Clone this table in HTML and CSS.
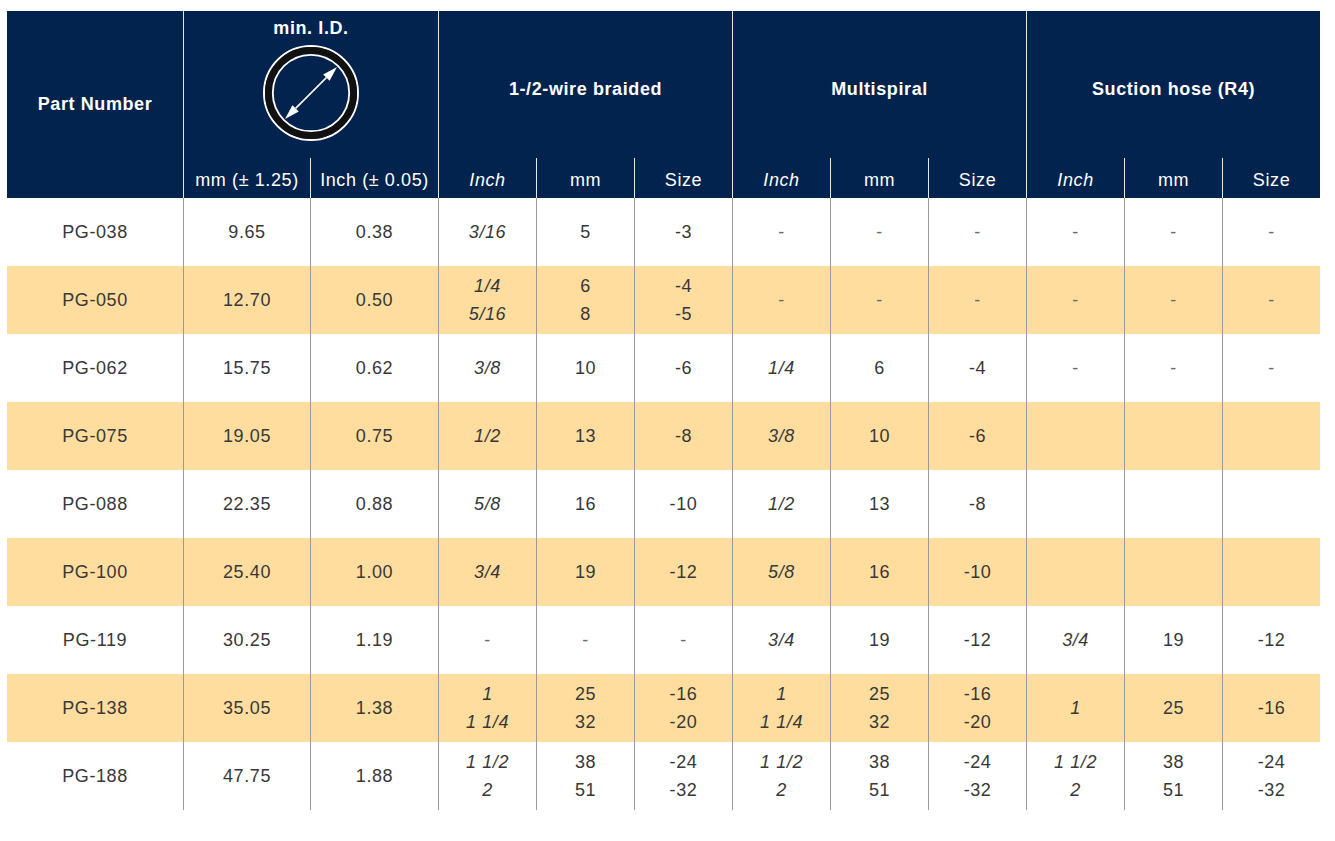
FILE: index.html
```html
<!DOCTYPE html>
<html lang="en">
<head>
<meta charset="utf-8">
<title>Hose size table</title>
<link rel="stylesheet" href="styles.css">
</head>
<body>
<table class="spec">
  <colgroup>
    <col class="c-pn">
    <col class="c-id"><col class="c-id2">
    <col class="c-s"><col class="c-s"><col class="c-s">
    <col class="c-s"><col class="c-s"><col class="c-s">
    <col class="c-s"><col class="c-s"><col class="c-s">
  </colgroup>
  <thead>
    <tr class="g-row">
      <th class="pn" rowspan="2">Part Number</th>
      <th class="mid" colspan="2">
        <div class="mid-title">min. I.D.</div>
        <svg class="mid-icon" width="100" height="100" viewBox="0 0 100 100" aria-hidden="true">
          <circle cx="50" cy="50" r="47" fill="none" stroke="#fff" stroke-width="2"/>
          <circle cx="50" cy="50" r="42.5" fill="none" stroke="#111" stroke-width="7"/>
          <circle cx="50" cy="50" r="38.2" fill="none" stroke="#fff" stroke-width="1.8"/>
          <line x1="65.4" y1="34.6" x2="34.6" y2="65.4" stroke="#fff" stroke-width="1.6"/>
          <polygon points="76,24 68.6,37.8 62.2,31.4" fill="#fff"/>
          <polygon points="24,76 37.8,68.6 31.4,62.2" fill="#fff"/>
        </svg>
      </th>
      <th class="grp" colspan="3">1-/2-wire braided</th>
      <th class="grp" colspan="3">Multispiral</th>
      <th class="grp" colspan="3">Suction hose (R4)</th>
    </tr>
    <tr class="sub-row">
      <th>mm (± 1.25)</th>
      <th>Inch (± 0.05)</th>
      <th class="i">Inch</th><th>mm</th><th>Size</th>
      <th class="i">Inch</th><th>mm</th><th>Size</th>
      <th class="i">Inch</th><th>mm</th><th>Size</th>
    </tr>
  </thead>
  <tbody>
    <tr>
      <td>PG-038</td><td>9.65</td><td>0.38</td>
      <td class="i">3/16</td><td>5</td><td>-3</td>
      <td class="d">-</td><td class="d">-</td><td class="d">-</td>
      <td class="d">-</td><td class="d">-</td><td class="d">-</td>
    </tr>
    <tr class="hl">
      <td>PG-050</td><td>12.70</td><td>0.50</td>
      <td class="i">1/4<br>5/16</td><td>6<br>8</td><td>-4<br>-5</td>
      <td class="d">-</td><td class="d">-</td><td class="d">-</td>
      <td class="d">-</td><td class="d">-</td><td class="d">-</td>
    </tr>
    <tr>
      <td>PG-062</td><td>15.75</td><td>0.62</td>
      <td class="i">3/8</td><td>10</td><td>-6</td>
      <td class="i">1/4</td><td>6</td><td>-4</td>
      <td class="d">-</td><td class="d">-</td><td class="d">-</td>
    </tr>
    <tr class="hl">
      <td>PG-075</td><td>19.05</td><td>0.75</td>
      <td class="i">1/2</td><td>13</td><td>-8</td>
      <td class="i">3/8</td><td>10</td><td>-6</td>
      <td></td><td></td><td></td>
    </tr>
    <tr>
      <td>PG-088</td><td>22.35</td><td>0.88</td>
      <td class="i">5/8</td><td>16</td><td>-10</td>
      <td class="i">1/2</td><td>13</td><td>-8</td>
      <td></td><td></td><td></td>
    </tr>
    <tr class="hl">
      <td>PG-100</td><td>25.40</td><td>1.00</td>
      <td class="i">3/4</td><td>19</td><td>-12</td>
      <td class="i">5/8</td><td>16</td><td>-10</td>
      <td></td><td></td><td></td>
    </tr>
    <tr>
      <td>PG-119</td><td>30.25</td><td>1.19</td>
      <td class="d">-</td><td class="d">-</td><td class="d">-</td>
      <td class="i">3/4</td><td>19</td><td>-12</td>
      <td class="i">3/4</td><td>19</td><td>-12</td>
    </tr>
    <tr class="hl">
      <td>PG-138</td><td>35.05</td><td>1.38</td>
      <td class="i">1<br>1 1/4</td><td>25<br>32</td><td>-16<br>-20</td>
      <td class="i">1<br>1 1/4</td><td>25<br>32</td><td>-16<br>-20</td>
      <td class="i">1</td><td>25</td><td>-16</td>
    </tr>
    <tr>
      <td>PG-188</td><td>47.75</td><td>1.88</td>
      <td class="i">1 1/2<br>2</td><td>38<br>51</td><td>-24<br>-32</td>
      <td class="i">1 1/2<br>2</td><td>38<br>51</td><td>-24<br>-32</td>
      <td class="i">1 1/2<br>2</td><td>38<br>51</td><td>-24<br>-32</td>
    </tr>
  </tbody>
</table>
</body>
</html>
```

FILE: styles.css
```css
html, body {
  margin: 0;
  padding: 0;
  background: #ffffff;
}

body {
  font-family: "Liberation Sans", Arial, Helvetica, sans-serif;
}

.spec {
  border-collapse: separate;
  border-spacing: 0;
  table-layout: fixed;
  width: 1313px;
  margin: 11px 0 0 7px;
  font-size: 18px;
  letter-spacing: 0.6px;
  color: #383838;
}

.c-pn { width: 176px; }
.c-id { width: 127px; }
.c-id2 { width: 128px; }
.c-s { width: 98px; }

.spec th,
.spec td {
  padding: 0;
  text-align: center;
  box-sizing: border-box;
}

.spec thead th {
  background: #03234f;
  color: #ffffff;
}

.g-row {
  height: 147px;
}

.g-row th {
  font-weight: bold;
  vertical-align: middle;
  padding-top: 10px;
  border-left: 1px solid #e4e6ea;
}

.g-row th.pn {
  padding-top: 0;
  border-left: none;
}

.g-row th.mid {
  vertical-align: top;
  padding-top: 7px;
}

.mid-title {
  line-height: 20px;
}

.mid-icon {
  display: block;
  margin: 5px auto 0;
}

.sub-row {
  height: 40px;
}

.sub-row th {
  font-weight: normal;
  border-left: 1px solid #e4e6ea;
  line-height: 20px;
  padding-top: 4px;
}

.spec tbody tr {
  height: 68px;
}

.spec tbody td {
  border-left: 1px solid #9a9a9a;
  line-height: 28px;
  vertical-align: middle;
}

.spec tbody td:first-child {
  border-left: none;
}

.spec tbody tr.hl td {
  background: #fedd9f;
}

.i {
  font-style: italic;
}

.d {
  color: #6a6a6a;
}
```
